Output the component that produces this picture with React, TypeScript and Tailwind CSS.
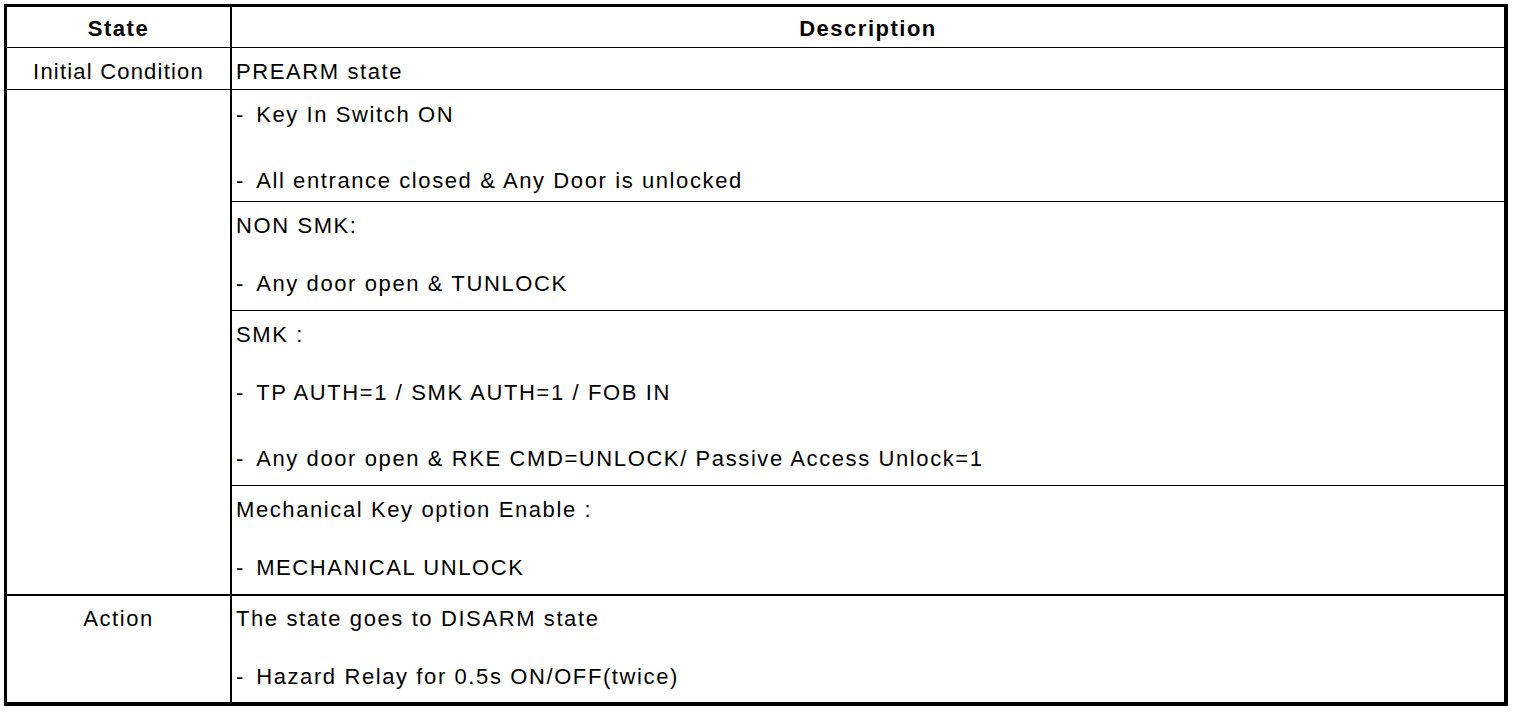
import React from "react";

const Dash = () => <span className="mr-[3.5px]">-{"\u00a0"}</span>;

const Line = ({ children, gap }: { children: React.ReactNode; gap?: string }) => (
  <p className={`whitespace-pre ${gap ?? ""}`}>{children}</p>
);

export default function App() {
  return (
    <div className="w-[1520px] h-[712px] bg-white pl-[4px] pt-[4px] font-['Liberation_Sans',Arial,sans-serif] text-[22px] leading-[24px] tracking-[1.6px] text-black">
      <div className="w-[1504px] h-[702px] border-l-[3px] border-t-[3px] border-r-4 border-b-4 border-black flex flex-col">
        {/* header */}
        <div className="flex h-[41px] border-b border-black font-bold tracking-[1.5px]">
          <div className="w-[225px] border-r-2 border-black flex items-center justify-center pt-[3px]">State</div>
          <div className="flex-1 flex items-center justify-center pt-[3px]">Description</div>
        </div>

        {/* initial condition */}
        <div className="flex h-[42px] border-b border-black">
          <div className="w-[225px] border-r-2 border-black text-center pt-[12px] tracking-[1.2px]">Initial Condition</div>
          <div className="flex-1 pl-[4px] pt-[12px]">PREARM state</div>
        </div>

        {/* triggers */}
        <div className="flex h-[506px] border-b-2 border-black">
          <div className="w-[225px] border-r-2 border-black" />
          <div className="flex-1 flex flex-col">
            <div className="h-[112px] border-b border-black pl-[4px] pt-[13px]">
              <Line><Dash />Key In Switch ON</Line>
              <Line gap="mt-[42px]"><Dash />All entrance closed &amp; Any Door is unlocked</Line>
            </div>
            <div className="h-[109px] border-b border-black pl-[4px] pt-[12px]">
              <Line>NON SMK:</Line>
              <Line gap="mt-[34px]"><Dash />Any door open &amp; TUNLOCK</Line>
            </div>
            <div className="h-[175px] border-b border-black pl-[4px] pt-[12px]">
              <Line>SMK :</Line>
              <Line gap="mt-[34px]"><Dash />TP AUTH=1 / SMK AUTH=1 / FOB IN</Line>
              <Line gap="mt-[42px]"><Dash />Any door open &amp; RKE CMD=UNLOCK/ Passive Access Unlock=1</Line>
            </div>
            <div className="h-[108px] pl-[4px] pt-[12px]">
              <Line>Mechanical Key option Enable :</Line>
              <Line gap="mt-[34px]"><Dash />MECHANICAL UNLOCK</Line>
            </div>
          </div>
        </div>

        {/* action */}
        <div className="flex flex-1">
          <div className="w-[225px] border-r-2 border-black text-center pt-[11px]">Action</div>
          <div className="flex-1 pl-[4px] pt-[11px]">
            <Line>The state goes to DISARM state</Line>
            <Line gap="mt-[34px]"><Dash />Hazard Relay for 0.5s ON/OFF(twice)</Line>
          </div>
        </div>
      </div>
    </div>
  );
}
